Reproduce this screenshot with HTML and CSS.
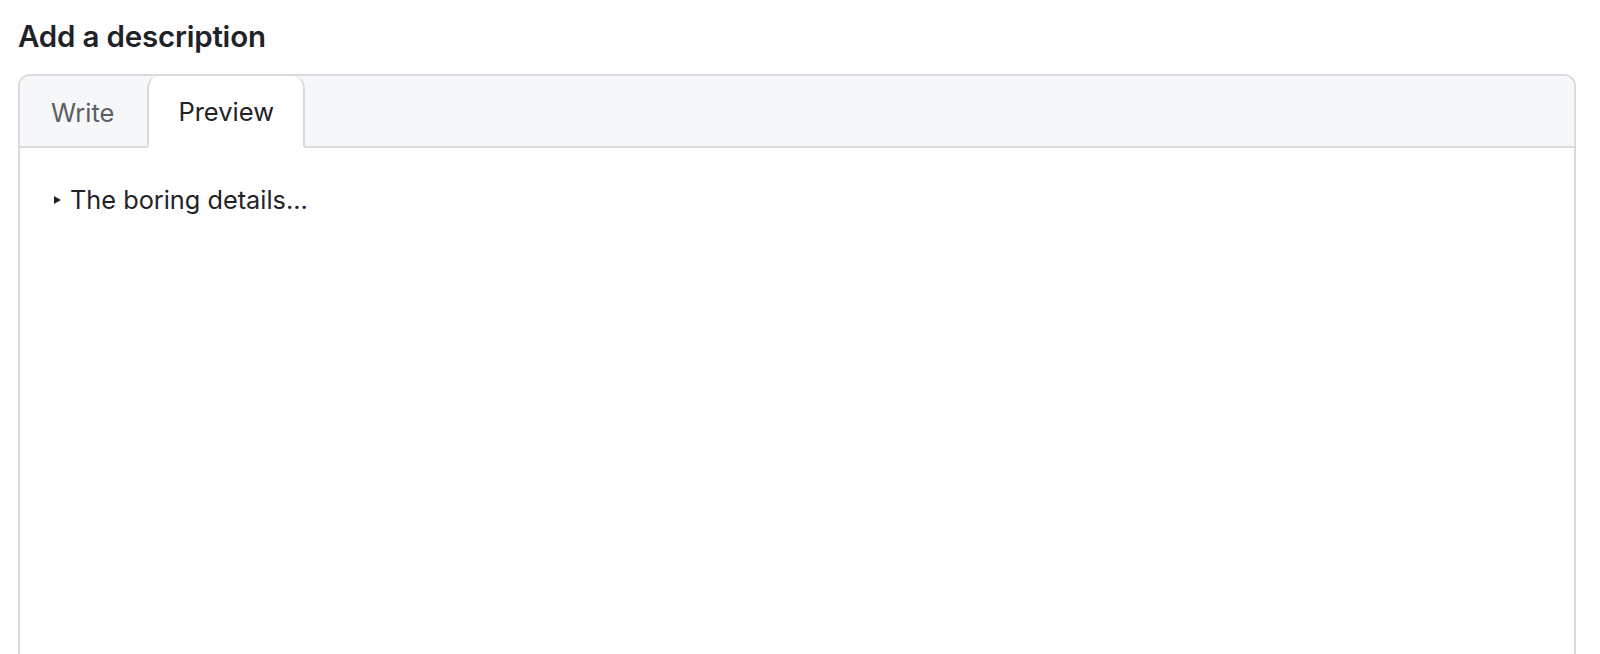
FILE: index.html
```html
<!DOCTYPE html>
<html lang="en">
<head>
  <meta charset="UTF-8">
  <meta name="viewport" content="width=device-width, initial-scale=1.0">
  <title>Add a description</title>
  <link rel="stylesheet" href="styles.css">
</head>
<body>
  <div class="page">
    <h2 class="section-title">Add a description</h2>
    <div class="editor">
      <div class="tabs">
        <button class="tab">Write</button>
        <button class="tab selected">Preview</button>
      </div>
      <div class="preview">
        <details class="details">
          <summary>The boring details...</summary>
        </details>
      </div>
    </div>
  </div>
</body>
</html>
```

FILE: styles.css
```css
html, body {
  height: 100%;
  overflow: hidden;
}

body {
  margin: 0;
  padding: 0;
  background-color: #fff;
  font-family: Inter, "Liberation Sans", Arial, sans-serif;
  color: #1f2328;
}

.page {
  padding: 16px 24px 0 18px;
}

.section-title {
  margin: 0 0 18px;
  font-size: 29.5px;
  font-weight: 600;
  line-height: 40px;
  letter-spacing: -0.2px;
}

.editor {
  border: 2px solid #d8dade;
  border-radius: 12px;
  overflow: hidden;
}

.tabs {
  display: flex;
  height: 70px;
  background-color: #f6f7f9;
  border-bottom: 2px solid #d8dade;
}

.tab {
  padding: 0 33px 0 31px;
  margin-bottom: -2px;
  border: none;
  background: none;
  font-family: inherit;
  font-size: 25.5px;
  color: #5a5f66;
  cursor: pointer;
}

.tab.selected {
  background-color: #fff;
  color: #1f2328;
  border: 2px solid #d8dade;
  border-bottom-color: #fff;
  border-top: none;
  border-radius: 12px 12px 0 0;
  padding: 0 29px;
}

.preview {
  height: 560px;
  padding: 36px 34px;
  background-color: #fff;
}

.details summary {
  list-style: none;
  display: flex;
  align-items: center;
  font-size: 25.3px;
  cursor: pointer;
}

.details summary::-webkit-details-marker {
  display: none;
}

.details summary::before {
  content: "";
  width: 0;
  height: 0;
  margin-right: 9px;
  border-top: 4px solid transparent;
  border-bottom: 4px solid transparent;
  border-left: 7px solid #1f2328;
}
```
